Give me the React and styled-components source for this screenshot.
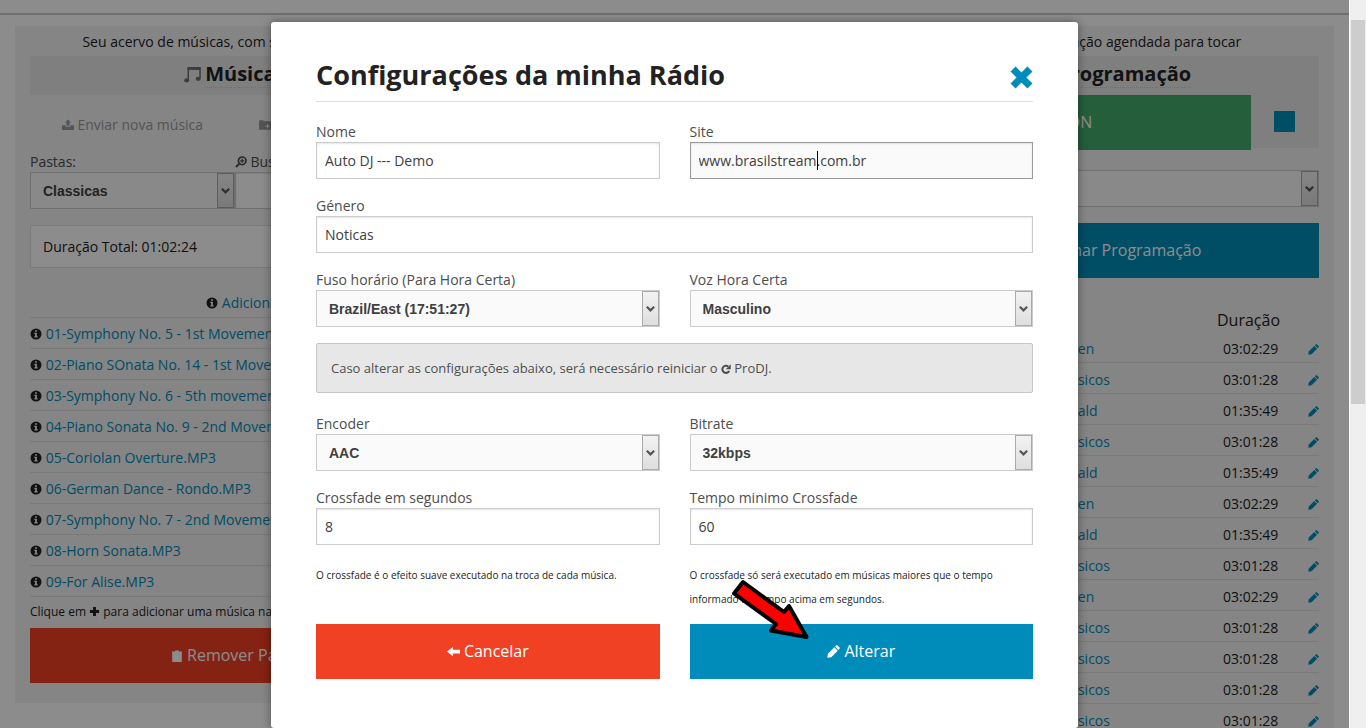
import React, { useState } from "react";
import styled, { createGlobalStyle } from "styled-components";

const tracks = [
    "01-Symphony No. 5 - 1st Movement.MP3",
    "02-Piano SOnata No. 14 - 1st Movement.MP3",
    "03-Symphony No. 6 - 5th movement.MP3",
    "04-Piano Sonata No. 9 - 2nd Movement.MP3",
    "05-Coriolan Overture.MP3",
    "06-German Dance - Rondo.MP3",
    "07-Symphony No. 7 - 2nd Movement.MP3",
    "08-Horn Sonata.MP3",
    "09-For Alise.MP3",
];

const schedule = [
    ["Beethoven", "03:02:29"],
    ["Mix Clássicos", "03:01:28"],
    ["Mc. Donald", "01:35:49"],
    ["Mix Clássicos", "03:01:28"],
    ["Mc. Donald", "01:35:49"],
    ["Beethoven", "03:02:29"],
    ["Mc. Donald", "01:35:49"],
    ["Mix Clássicos", "03:01:28"],
    ["Beethoven", "03:02:29"],
    ["Mix Clássicos", "03:01:28"],
    ["Mix Clássicos", "03:01:28"],
    ["Mix Clássicos", "03:01:28"],
    ["Mix Clássicos", "03:01:28"],
];

function Icon({ name, size = 12 }) {
    return (
        <Svg viewBox="0 0 12 12" width={size} height={size} aria-hidden="true">
            {name === "music" && (
                <>
                    <path d="M3 10V1.2h8.3v7.6" fill="none" stroke="currentColor" strokeWidth="1.1" />
                    <path d="M2.6 1h9v1.8h-9z" />
                    <ellipse cx="1.9" cy="10.2" rx="1.8" ry="1.5" />
                    <ellipse cx="10" cy="9" rx="1.8" ry="1.5" />
                </>
            )}
            {name === "upload" && (
                <path d="M6 .6l3 3.2H7.400v3H4.600v-3H3zM0 6.200h3.600V7.800h4.800V6.200H12V11H0z" />
            )}
            {name === "folder" && (
                <path fillRule="evenodd" d="M0 2.2L.8 1.2h3.4l.8 1h6.4l.6.7v7.3l-.6.6H.6l-.6-.6zM8 5v1.5H6.5v1.2H8v1.5h1.2V7.7h1.5V6.5H9.2V5z" />
            )}
            {name === "search" && (
                <>
                    <circle cx="7.2" cy="4.8" r="3.8" fill="none" stroke="currentColor" strokeWidth="1.7" />
                    <path d="M6.6 2.8h1.2v1.4h1.4v1.2H7.8v1.4H6.6V5.4H5.2V4.2h1.4zM3.6 7L5 8.4l-3.3 3.3L.2 10.3z" />
                </>
            )}
            {name === "info" && (
                <path fillRule="evenodd" d="M6 .5a5.5 5.5 0 1 0 0 11a5.5 5.5 0 0 0 0-11zM5.1 2.2h1.8v1.6H5.1zM4.3 4.7h2.6v3.6h.8v1.2H4.3V8.3h.8V5.9h-.8z" />
            )}
            {name === "plus" && <path d="M4.4 1h3.2v3.4H11v3.2H7.6V11H4.4V7.6H1V4.4h3.4z" />}
            {name === "trash" && <path d="M4 .4h4v1h3v1.500H1V1.400h3zM1.200 2.900h9.600V12H1.200z" />}
            {name === "pencil" && (
                <path d="M.3 11.7l.5-3.6 6-6 3.1 3.1-6 6zM7.5 1.4L8.7.3h.9l2.1 2.1v.9l-1.1 1.2z" />
            )}
            {name === "back" && <path d="M0 6l5.4-4.2v2.6H12v3.4H5.4v2.6z" />}
            {name === "refresh" && (
                <>
                    <path d="M9.8 8.3A4.3 4.3 0 1 1 8.600 2.900" fill="none" stroke="currentColor" strokeWidth="2.5" />
                    <path d="M11.700.3v6H5.700z" />
                </>
            )}
            {name === "chevron" && (
                <path d="M2 4l4 4 4-4" fill="none" stroke="currentColor" strokeWidth="2.4" />
            )}
            {name === "close" && (
                <path d="M1.6 1.6l8.8 8.8M10.4 1.6l-8.8 8.8" fill="none" stroke="currentColor" strokeWidth="3.7" />
            )}
        </Svg>
    );
}

function Select({ id, options, ...rest }) {
    return (
        <SelectWrapper>
            <SelectBox id={id} {...rest}>
                {options.map((option) => (
                    <option key={option}>{option}</option>
                ))}
            </SelectBox>
            <SelectArrow>
                <Icon name="chevron" size={11} />
            </SelectArrow>
        </SelectWrapper>
    );
}

function Library() {
    return (
        <Panel $column={1}>
            <Intro>Seu acervo de músicas, com suas várias pastas</Intro>
            <Heading>
                <HeadingIcon><Icon name="music" size={17} /></HeadingIcon>
                <HeadingText>Músicas</HeadingText>
            </Heading>
            <Actions>
                <Action href="#enviar"><Icon name="upload" /> Enviar nova música</Action>
                <Action href="#pasta"><Icon name="folder" /> Adicionar outra pasta</Action>
            </Actions>
            <Filters>
                <div>
                    <Label htmlFor="pastas">Pastas:</Label>
                    <Select id="pastas" options={["Classicas"]} />
                </div>
                <div>
                    <Label htmlFor="buscar"><Icon name="search" /> Buscar:</Label>
                    <Input id="buscar" type="text" />
                </div>
            </Filters>
            <Total>Duração Total: 01:02:24</Total>
            <AddAll><Icon name="info" /> <a href="#adicionar">Adicionar</a></AddAll>
            <TrackList>
                {tracks.map((track) => (
                    <Track key={track}>
                        <Icon name="info" /> <a href="#musica">{track}</a>
                    </Track>
                ))}
            </TrackList>
            <Hint>Clique em <Icon name="plus" size={11} /> para adicionar uma música na playlist</Hint>
            <Button type="button" $color="#f04124"><Icon name="trash" /> Remover Pasta</Button>
        </Panel>
    );
}

function Schedule() {
    return (
        <Panel $column={3} $fill>
            <Intro>Sua programação agendada para tocar</Intro>
            <OnAir>
                <Heading>
                    <HeadingIcon><Icon name="music" size={17} /></HeadingIcon>
                    <HeadingText>Programação</HeadingText>
                </Heading>
                <OnAirRow>
                    <Button type="button" $color="#43ac6a">ON</Button>
                    <Stop type="button" aria-label="Parar" />
                </OnAirRow>
            </OnAir>
            <Select aria-label="Programação" options={[""]} />
            <ScheduleButton type="button" $color="#008cba">Adicionar Programação</ScheduleButton>
            <Table>
                <thead>
                    <tr>
                        <th />
                        <th />
                        <DurationHead>Duração</DurationHead>
                        <th />
                    </tr>
                </thead>
                <tbody>
                    {schedule.map(([name, time], index) => (
                        <tr key={index}>
                            <Cell $width="28%" />
                            <Cell><a href="#programa">{name}</a></Cell>
                            <TimeCell $width="78px">{time}</TimeCell>
                            <Cell $width="24px" $right>
                                <a href="#editar" aria-label="Editar"><Icon name="pencil" size={11} /></a>
                            </Cell>
                        </tr>
                    ))}
                </tbody>
            </Table>
        </Panel>
    );
}

function App() {
    const [form, setForm] = useState({
        nome: "Auto DJ --- Demo",
        site: "www.brasilstream.com.br",
        genero: "Noticas",
        crossfade: "8",
        minimo: "60",
    });

    const field = (name) => ({
        id: name,
        type: "text",
        value: form[name],
        onChange: (e) => setForm({ ...form, [name]: e.target.value }),
    });

    return (
        <Window>
            <GlobalStyle />
            <Page>
                <TopBar />
                <Columns>
                    <Library />
                    <Schedule />
                </Columns>
                <Overlay>
                    <Modal role="dialog" aria-labelledby="titulo">
                        <ModalHeader>
                            <Title id="titulo">Configurações da minha Rádio</Title>
                            <Close type="button" aria-label="Fechar"><Icon name="close" size={23} /></Close>
                        </ModalHeader>
                        <Form>
                            <div>
                                <Label htmlFor="nome">Nome</Label>
                                <Input {...field("nome")} />
                            </div>
                            <div>
                                <Label htmlFor="site">Site</Label>
                                <FocusedField>
                                    <Input $focused {...field("site")} />
                                    <Caret />
                                </FocusedField>
                            </div>
                            <Wide>
                                <Label htmlFor="genero">Género</Label>
                                <Input {...field("genero")} />
                            </Wide>
                            <div>
                                <Label htmlFor="fuso">Fuso horário (Para Hora Certa)</Label>
                                <Select id="fuso" options={["Brazil/East (17:51:27)"]} />
                            </div>
                            <div>
                                <Label htmlFor="voz">Voz Hora Certa</Label>
                                <Select id="voz" options={["Masculino", "Feminino"]} />
                            </div>
                            <Alert>
                                Caso alterar as configurações abaixo, será necessário reiniciar o{" "}
                                <Icon name="refresh" size={10} /> ProDJ.
                            </Alert>
                            <div>
                                <Label htmlFor="encoder">Encoder</Label>
                                <Select id="encoder" options={["AAC", "MP3"]} />
                            </div>
                            <div>
                                <Label htmlFor="bitrate">Bitrate</Label>
                                <Select id="bitrate" options={["32kbps", "64kbps"]} />
                            </div>
                            <div>
                                <Label htmlFor="crossfade">Crossfade em segundos</Label>
                                <Input {...field("crossfade")} />
                            </div>
                            <div>
                                <Label htmlFor="minimo">Tempo minimo Crossfade</Label>
                                <Input {...field("minimo")} />
                            </div>
                            <Footer>
                                <Note>O crossfade é o efeito suave executado na troca de cada música.</Note>
                                <Note>
                                    O crossfade só será executado em músicas maiores que o tempo informado no tempo acima em segundos.
                                </Note>
                                <Button type="button" $color="#f04124"><Icon name="back" size={13} /> Cancelar</Button>
                                <Submit>
                                    <Button type="button" $color="#008cba"><Icon name="pencil" size={13} /> Alterar</Button>
                                    <Pointer viewBox="0 0 80 62" width="80" height="62" aria-hidden="true">
                                        <path d="M13 4L4 15.500L46 46L41 52.500L76.500 59L59 28L54 34z" />
                                    </Pointer>
                                </Submit>
                            </Footer>
                        </Form>
                    </Modal>
                </Overlay>
            </Page>
            <Scrollbar><Thumb /></Scrollbar>
        </Window>
    );
}

const GlobalStyle = createGlobalStyle`
*, *::before, *::after {
    box-sizing: border-box;
}
body {
    margin: 0;
    background: white;
    color: #222;
    font-family: "Open Sans", sans-serif;
    font-size: 14px;
    line-height: 21px;
}
a {
    color: #008cba;
    text-decoration: none;
}
button, input, select {
    font-family: inherit;
    border-radius: 0;
}
`
const Svg = styled.svg`
fill: currentColor;
vertical-align: -1px;
`
const Window = styled.div`
display: flex;
height: 100vh;
overflow: hidden;
`
const Page = styled.div`
position: relative;
flex: 1;
display: flex;
flex-direction: column;
overflow: hidden;
`
const Scrollbar = styled.div`
width: 17px;
padding: 20px 1px 0;
background: #efefef;
border-left: 1px solid white;
`
const Thumb = styled.div`
height: 384px;
background: #cdcdcd;
`
const TopBar = styled.div`
flex: none;
height: 15px;
border-bottom: 2px solid #ccc;
`
const Columns = styled.div`
flex: 1;
display: grid;
grid-template-columns: repeat(3, 1fr);
align-items: start;
padding: 11px 15px 0;
`
const Panel = styled.section`
grid-column: ${(props) => props.$column};
grid-row: 1;
padding: 5px 15px ${(props) => (props.$fill ? "60px" : "20px")};
background: #f2f2f2;
`
const Intro = styled.p`
margin: 0 0 4px;
text-align: center;
`
const Heading = styled.h4`
display: flex;
justify-content: center;
align-items: center;
gap: 4px;
margin: 0;
height: 39px;
padding-bottom: 2px;
background: #e8e8e8;
font-size: 20px;
line-height: 26px;
`
const HeadingIcon = styled.span`
display: flex;
color: #6f6f6f;
`
const HeadingText = styled.span`
border-bottom: 1px dotted #ccc;
`
const Actions = styled.div`
display: grid;
grid-template-columns: 1fr 1fr;
margin: 19px 0 16px;
text-align: center;
`
const Action = styled.a`
color: #999;
white-space: nowrap;
`
const Filters = styled.div`
display: grid;
grid-template-columns: 1fr 1fr;
margin-bottom: 16px;
`
const Label = styled.label`
display: block;
color: #4d4d4d;
`
const Input = styled.input`
display: block;
width: 100%;
height: 37px;
padding: 8px;
border: 1px solid ${(props) => (props.$focused ? "#999" : "#ccc")};
background: ${(props) => (props.$focused ? "#fafafa" : "white")};
box-shadow: inset 0 1px 2px rgba(0, 0, 0, 0.1);
color: #404040;
font-size: 14px;
outline: none;
`
const SelectWrapper = styled.div`
position: relative;
`
const SelectBox = styled.select`
display: block;
appearance: none;
width: 100%;
height: 37px;
padding: 0 20px 0 12px;
border: 1px solid #ccc;
background: #fafafa;
color: #404040;
font-family: "Liberation Sans", sans-serif;
font-size: 14px;
font-weight: bold;
`
const SelectArrow = styled.span`
position: absolute;
top: 1px;
right: 1px;
bottom: 1px;
width: 17px;
display: flex;
align-items: center;
justify-content: center;
border: 1px solid #aaa;
background: linear-gradient(#f2f2f2, #dfdfdf);
color: #555;
pointer-events: none;
`
const Total = styled.div`
padding: 10px 12px;
margin-bottom: 24px;
border: 1px solid #ddd;
background: white;
`
const AddAll = styled.div`
height: 25px;
padding-left: 43%;
`
const TrackList = styled.ul`
list-style: none;
margin: 0;
padding: 0;
border-top: 1px solid #ddd;
`
const Track = styled.li`
height: 31px;
padding-top: 5px;
border-bottom: 1px solid #ddd;
white-space: nowrap;
overflow: hidden;
`
const Hint = styled.p`
margin: 4px 0 6px;
font-size: 12px;
white-space: nowrap;
`
const Button = styled.button`
display: block;
width: 100%;
height: 55px;
padding: 0 0 2px;
border: 0;
background: ${(props) => props.$color};
color: white;
font-size: 16px;
line-height: 24px;
`
const OnAir = styled.div`
margin-bottom: 22px;
background: #e8e8e8;
`
const OnAirRow = styled.div`
display: grid;
grid-template-columns: 5fr 1fr;
align-items: start;
justify-items: center;
height: 53px;
`
const Stop = styled.button`
width: 21px;
height: 21px;
margin-top: 16px;
padding: 0;
border: 0;
background: #008cba;
`
const ScheduleButton = styled(Button)`
margin: 16px 0 32px;
`
const Table = styled.table`
width: 100%;
border-collapse: separate;
border-spacing: 0;
`
const DurationHead = styled.th`
padding: 0 0 2px;
font-size: 16px;
font-weight: normal;
line-height: 20px;
text-align: left;
`
const Cell = styled.td`
width: ${(props) => props.$width || "auto"};
height: 31px;
padding: 3px 0 0;
border-bottom: 1px solid #ddd;
text-align: ${(props) => (props.$right ? "right" : "left")};
`
const TimeCell = styled(Cell)`
padding-left: 6px;
`
const Overlay = styled.div`
position: absolute;
inset: 0;
display: flex;
justify-content: center;
padding-top: 22px;
background: rgba(0, 0, 0, 0.45);
`
const Modal = styled.div`
width: 90%;
max-width: 807px;
min-height: 100%;
padding: 36px 45px;
border-radius: 3px;
background: white;
box-shadow: 0 0 10px rgba(0, 0, 0, 0.4);
`
const ModalHeader = styled.header`
display: flex;
justify-content: space-between;
align-items: flex-start;
padding-bottom: 9px;
margin-bottom: 19px;
border-bottom: 1px solid #ddd;
`
const Title = styled.h3`
margin: 0;
font-size: 27px;
line-height: 34px;
`
const Close = styled.button`
display: flex;
padding: 8px 0 0;
border: 0;
background: none;
color: #008cba;
`
const Form = styled.form`
display: grid;
grid-template-columns: 1fr 1fr;
gap: 16px 30px;
`
const Wide = styled.div`
grid-column: 1 / -1;
`
const FocusedField = styled.div`
position: relative;
`
const Caret = styled.span`
position: absolute;
top: 9px;
left: 127px;
width: 1px;
height: 19px;
background: black;
`
const Alert = styled(Wide)`
padding: 14px;
margin-bottom: 4px;
border: 1px solid #c7c7c7;
border-radius: 2px;
background: #e7e7e7;
color: #4f4f4f;
font-size: 13px;
line-height: 20px;
`
const Footer = styled(Wide)`
display: grid;
grid-template-columns: 1fr 1fr;
gap: 13px 30px;
padding-top: 2px;
`
const Note = styled.p`
margin: 0;
font-size: 10px;
line-height: 24px;
`
const Submit = styled.div`
position: relative;
`
const Pointer = styled.svg`
position: absolute;
top: -46px;
left: 40px;
fill: #f00;
stroke: black;
stroke-width: 4;
stroke-linejoin: round;
pointer-events: none;
`

export default App
